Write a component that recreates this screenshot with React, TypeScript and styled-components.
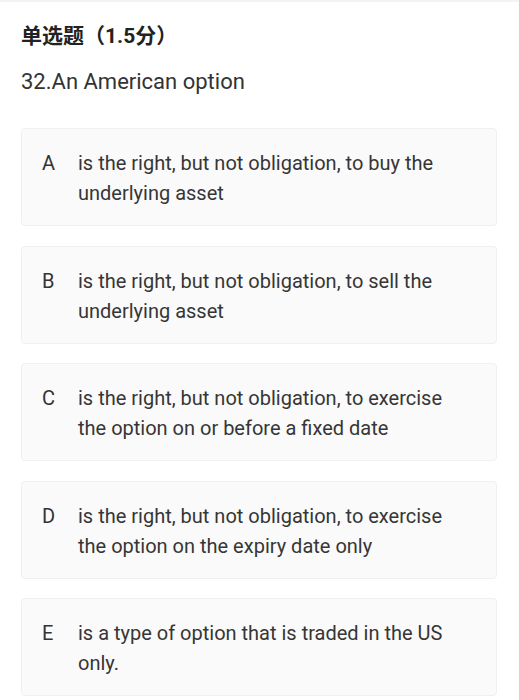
import React from 'react';
import styled, { createGlobalStyle } from 'styled-components';

const GlobalStyle = createGlobalStyle`
  html, body {
    margin: 0;
    padding: 0;
    background: #ffffff;
  }
  body {
    font-family: Roboto, "Noto Sans CJK SC", "Liberation Sans", sans-serif;
    color: #333333;
  }
`;

const Page = styled.div`
  border-top: 2px solid #f3f3f3;
  padding: 20px 22px 0 21px;
`;

const Heading = styled.div`
  font-size: 21px;
  font-weight: 700;
  line-height: 28px;
  color: #222222;
`;

const Question = styled.div`
  margin-top: 18px;
  font-size: 22px;
  line-height: 28px;
  color: #333333;
`;

const OptionList = styled.div`
  margin-top: 32px;
  display: flex;
  flex-direction: column;
  gap: 19.5px;
`;

const OptionCard = styled.div`
  display: flex;
  align-items: flex-start;
  min-height: 98px;
  box-sizing: border-box;
  padding: 19px 30px 17px 20px;
  background: #fafafa;
  border: 1px solid #f0f0f0;
  border-radius: 4px;
`;

const Letter = styled.span`
  flex: 0 0 36px;
  font-size: 20px;
  line-height: 30px;
  color: #333333;
`;

const OptionText = styled.span`
  font-size: 20px;
  line-height: 30px;
  color: #363636;
`;

const options = [
  { key: 'A', text: 'is the right, but not obligation, to buy the underlying asset' },
  { key: 'B', text: 'is the right, but not obligation, to sell the underlying asset' },
  { key: 'C', text: 'is the right, but not obligation, to exercise the option on or before a fixed date' },
  { key: 'D', text: 'is the right, but not obligation, to exercise the option on the expiry date only' },
  { key: 'E', text: 'is a type of option that is traded in the US only.' },
];

const App = () => (
  <>
    <GlobalStyle />
    <Page>
      <Heading>单选题（1.5分）</Heading>
      <Question>32.An American option</Question>
      <OptionList>
        {options.map((o) => (
          <OptionCard key={o.key}>
            <Letter>{o.key}</Letter>
            <OptionText>{o.text}</OptionText>
          </OptionCard>
        ))}
      </OptionList>
    </Page>
  </>
);

export default App;
